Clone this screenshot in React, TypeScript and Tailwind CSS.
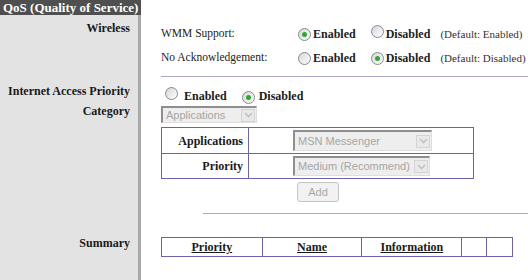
import React from "react";

const sans = "font-['Liberation_Sans',Arial,sans-serif]";

function Radio({ checked }: { checked?: boolean }) {
  return (
    <span className="inline-flex items-center justify-center w-[13px] h-[13px] rounded-full border border-[#7f8b98] bg-gradient-to-br from-[#d6d6d6] to-white shrink-0">
      {checked && <span className="w-[5px] h-[5px] rounded-full bg-[#2fa82f]" />}
    </span>
  );
}

function Select({ label, w, h = 20 }: { label: string; w: number; h?: number }) {
  return (
    <div
      className="flex items-center bg-[#eeeeee] border-t-2 border-l-2 border-[#8e8e8e] border-r border-b border-r-[#dedede] border-b-[#dedede]"
      style={{ width: w, height: h }}
    >
      <span className={`flex-1 pl-[3px] text-[11px] text-[#a5a5a5] leading-none whitespace-nowrap overflow-hidden ${sans}`}>
        {label}
      </span>
      <span className="flex items-center justify-center w-[14px] h-[13px] mr-[1px] bg-[#e9e9e9] border border-[#d4d4d4] shrink-0">
        <svg width="9" height="6" viewBox="0 0 9 6">
          <path d="M1 1 L4.5 4.5 L8 1" fill="none" stroke="#c2c2c2" strokeWidth="1.6" />
        </svg>
      </span>
    </div>
  );
}

function Row({
  label,
  h,
  labelPt = 0,
  children,
}: {
  label?: string;
  h: number;
  labelPt?: number;
  children?: React.ReactNode;
}) {
  return (
    <div className="flex" style={{ height: h }}>
      <div
        className="w-[141px] shrink-0 bg-[#e3e3e3] border-r-[3px] border-[#a9a9a9] text-right pr-[8px] text-[12px] font-bold leading-[14px] text-[#1a1a1a]"
        style={{ paddingTop: labelPt }}
      >
        {label}
      </div>
      <div className="flex-1 pl-[20px] min-w-0">{children}</div>
    </div>
  );
}

export default function App() {
  return (
    <div className="w-[528px] h-[280px] bg-white overflow-hidden font-['Liberation_Serif','Times_New_Roman',serif]">
      <div className="flex h-[15px]">
        <div className="w-[141px] shrink-0 bg-[#4f4f4f] text-white text-[13px] font-bold leading-[15px] pl-[3px] whitespace-nowrap">
          QoS (Quality of Service)
        </div>
        <div className="flex-1" />
      </div>

      <Row label="Wireless" h={56} labelPt={6}>
        <div className="pt-[7px] text-[11.5px] text-[#222] whitespace-nowrap">
          <div className="flex items-center h-[24px]">
            <span className="w-[137px] shrink-0">WMM Support:</span>
            <Radio checked />
            <span className="ml-[2px] text-[12px] font-bold">Enabled</span>
            <span className="ml-[15px]"><Radio /></span>
            <span className="ml-[2px] text-[12px] font-bold">Disabled</span>
            <span className="ml-[10px] text-[11px] text-[#333]">(Default: Enabled)</span>
          </div>
          <div className="flex items-center h-[24px]">
            <span className="w-[137px] shrink-0">No Acknowledgement:</span>
            <Radio />
            <span className="ml-[2px] text-[12px] font-bold">Enabled</span>
            <span className="ml-[15px]"><Radio checked /></span>
            <span className="ml-[2px] text-[12px] font-bold">Disabled</span>
            <span className="ml-[10px] text-[11px] text-[#333]">(Default: Disabled)</span>
          </div>
        </div>
      </Row>

      <Row h={10}>
        <div className="mt-[5px] h-px bg-[#aaa6cc]" />
      </Row>

      <Row label="Internet Access Priority" h={23} labelPt={3}>
        <div className="flex items-center h-[18px] mt-[6px] text-[12px] font-bold text-[#1a1a1a]">
          <span className="ml-[4px]"><Radio /></span>
          <span className="ml-[6px]">Enabled</span>
          <span className="ml-[15px]"><Radio checked /></span>
          <span className="ml-[4px]">Disabled</span>
        </div>
      </Row>

      <Row label="Category" h={23}>
        <div className="pt-[2px]">
          <Select label="Applications" w={96} h={17} />
        </div>
      </Row>

      <Row h={51}>
        <table className="w-[313px] border-collapse border border-[#6c64a8] text-[12px] text-[#1a1a1a]">
          <tbody>
            <tr className="h-[26px]">
              <td className="w-[87px] border border-[#6c64a8] text-right pr-[5px] font-bold">Applications</td>
              <td className="border border-[#6c64a8] pl-[44px]">
                <Select label="MSN Messenger" w={139} h={21} />
              </td>
            </tr>
            <tr className="h-[25px]">
              <td className="border border-[#6c64a8] text-right pr-[5px] font-bold">Priority</td>
              <td className="border border-[#6c64a8] pl-[44px]">
                <Select label="Medium (Recommend)" w={137} h={20} />
              </td>
            </tr>
          </tbody>
        </table>
      </Row>

      <Row h={28}>
        <button
          disabled
          className={`mt-[4px] ml-[136px] w-[42px] h-[20px] rounded-[3px] border border-[#c4c4c4] bg-[#f2f2f2] text-[11px] text-[#a8a8a8] ${sans}`}
        >
          Add
        </button>
      </Row>

      <Row h={14}>
        <div className="mt-[7px] ml-[42px] h-px bg-[#aaa6cc]" />
      </Row>

      <Row label="Summary" h={60} labelPt={16}>
        <table className="mt-[17px] w-[352px] border-collapse border border-[#6c64a8] text-[12px] font-bold text-[#1a1a1a]">
          <tbody>
            <tr className="h-[18px]">
              <td className="w-[101px] border border-[#6c64a8] text-center underline">Priority</td>
              <td className="w-[100px] border border-[#6c64a8] text-center underline">Name</td>
              <td className="w-[100px] border border-[#6c64a8] text-center underline">Information</td>
              <td className="w-[25px] border border-[#6c64a8]" />
              <td className="w-[26px] border border-[#6c64a8]" />
            </tr>
          </tbody>
        </table>
      </Row>
    </div>
  );
}
